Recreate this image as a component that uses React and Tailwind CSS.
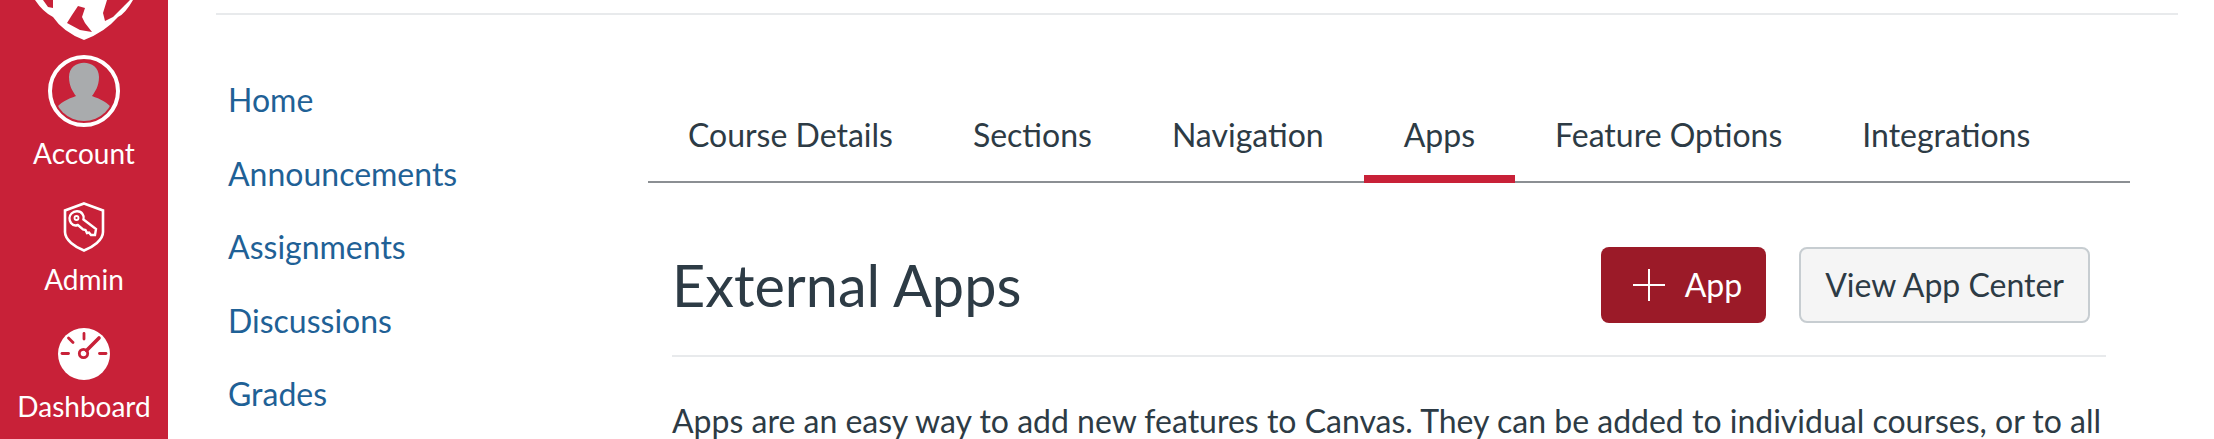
export default function App() {
  const tabs = [
    ["Course Details", false],
    ["Sections", false],
    ["Navigation", false],
    ["Apps", true],
    ["Feature Options", false],
    ["Integrations", false],
  ];
  return (
    <div className="flex h-[439px] w-[2214px] overflow-hidden bg-white font-['Lato','Noto_Sans',sans-serif] [font-feature-settings:'liga','dlig']">
      <aside className="flex h-full w-[168px] shrink-0 flex-col items-center bg-[#c82138] text-white">
        <svg viewBox="0 0 98 40" className="h-[40px] w-[98px] shrink-0">
          <path d="M0 0 H98 Q90 14 83 17 Q70 32 49 40 Q28 32 18 17 Q8 12 0 0Z" fill="#fff" />
          <path d="M8 0 H18 L18 8 L13 7Z M43 6 L50 8 L47 17 L50 23 L57 32 L45 30 L32 23 L37 15Z M72 0 H95 L90 5 L78 17 L70 21 L68 13Z" fill="#c82138" />
        </svg>
        <div className="mt-[15px] flex h-[72px] w-[72px] shrink-0 items-center justify-center rounded-full border-[4px] border-white">
          <svg viewBox="0 0 64 64" className="h-[64px] w-[64px]">
            <defs>
              <clipPath id="av"><circle cx="32" cy="32" r="30" /></clipPath>
            </defs>
            <g clipPath="url(#av)" fill="#a9abad">
              <path d="M17 18 C17 -1 47 -1 47 18 C47 27 43 33 40 37 C48 40 56 43 62 52 V66 H2 V52 C8 43 16 40 24 37 C21 33 17 27 17 18Z" />
            </g>
          </svg>
        </div>
        <div className="mt-[8px] text-[28px] leading-[36px]">Account</div>
        <svg viewBox="0 0 42 50" className="mt-[31px] h-[50px] w-[42px] shrink-0" fill="none" stroke="#fff" strokeWidth="2.6">
          <path d="M21 1.5 L40 8.5 V30 C40 38 30 45 21 48.5 C12 45 2 38 2 30 V8.5Z" />
          <path d="M8.5 11.5 C11.5 8.5 17 8.5 19.5 12 C21 14 21 16 20.5 17.5 L33 27 L32 33 L28 33 L26 30.5 L24 31 L22.5 28 L20 27.5 L15 23 C12 24 9.5 23 8 21 C6 18 6 14 8.5 11.5Z" strokeWidth="2.4" />
          <circle cx="13.5" cy="16" r="2" strokeWidth="1.8" />
        </svg>
        <div className="mt-[9px] text-[28px] leading-[36px]">Admin</div>
        <svg viewBox="0 0 52 52" className="mt-[31px] h-[52px] w-[52px] shrink-0">
          <circle cx="26" cy="26" r="26" fill="#fff" />
          <g stroke="#c82138" strokeWidth="2.8" strokeLinecap="round" fill="none">
            <path d="M26 5.5 V11" />
            <path d="M10.5 10 L15 14.5" />
            <path d="M4 25.5 H10.5" />
            <path d="M41.5 25.5 H48" />
            <path d="M28.5 22.5 L41 10" strokeWidth="3.6" />
            <circle cx="25.5" cy="25.5" r="4.2" />
          </g>
        </svg>
        <div className="mt-[8px] text-[28px] leading-[36px]">Dashboard</div>
      </aside>
      <div className="flex min-w-0 flex-1 flex-col pl-[48px] pr-[36px]">
        <div className="mt-[13px] h-[2px] w-full shrink-0 bg-[#e8eaec]" />
        <div className="flex min-h-0 flex-1">
          <nav className="flex w-[432px] shrink-0 flex-col pl-[12px] pt-[48px] text-[32px] leading-[73.5px] text-[#1f6196]">
            <a>Home</a>
            <a>Announcements</a>
            <a>Assignments</a>
            <a>Discussions</a>
            <a>Grades</a>
          </nav>
          <main className="flex w-[1482px] shrink-0 flex-col text-[#2d3b45]">
            <div className="mt-[88px] flex h-[80px] w-[1482px] shrink-0 items-stretch border-b-[2px] border-[#8b8f93]">
              {tabs.map(([t, on]) => (
                <div key={t} className={"-mb-[2px] flex items-start border-b-[8px] px-[40px] pt-[8px] text-[32px] leading-[48px] " + (on ? "border-[#c82138]" : "border-transparent")}>
                  {t}
                </div>
              ))}
            </div>
            <div className="mx-[24px] flex h-[174px] shrink-0 items-start justify-between border-b-[2px] border-[#e8eaec] pt-[64px]">
              <h1 className="text-[57.6px] leading-[76px]">External Apps</h1>
              <div className="mr-[16px] flex gap-[33px]">
                <button className="flex h-[76px] items-center gap-[20px] rounded-[8px] bg-[#9b1a28] pl-[32px] pr-[24px] text-[32px] text-white">
                  <svg viewBox="0 0 32 32" className="h-[32px] w-[32px]" stroke="#fff" strokeWidth="2"><path d="M16 0 V32 M0 16 H32" /></svg>
                  App
                </button>
                <button className="h-[76px] rounded-[8px] border-[2px] border-[#c7cdd1] bg-[#f5f5f5] px-[24px] text-[32px]">View App Center</button>
              </div>
            </div>
            <p className="ml-[24px] mt-[40px] whitespace-nowrap text-[32px] leading-[48px]">Apps are an easy way to add new features to Canvas. They can be added to individual courses, or to all</p>
          </main>
        </div>
      </div>
    </div>
  );
}
